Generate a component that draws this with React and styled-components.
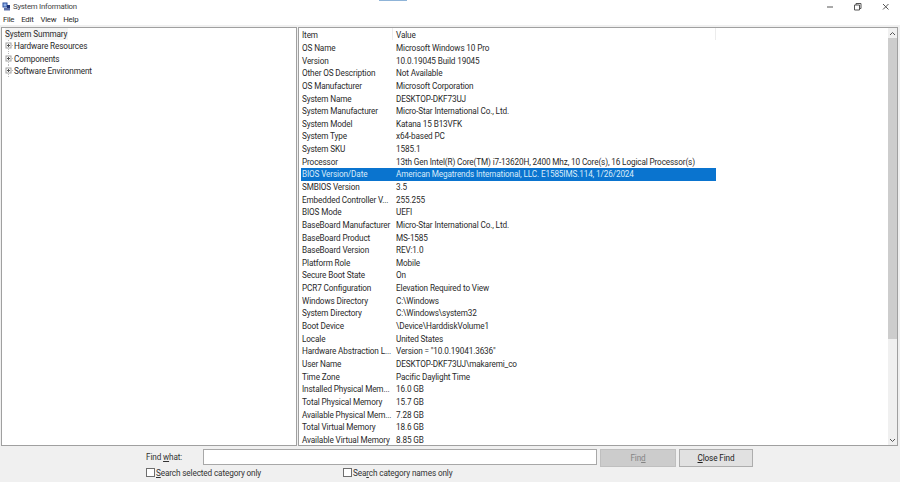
import React from "react";
import styled, { createGlobalStyle } from "styled-components";

const GlobalStyle = createGlobalStyle`
  html, body { margin: 0; padding: 0; background: #fff; }
  #root { width: 900px; height: 482px; overflow: hidden; }
`;

const Window = styled.div`
  position: relative;
  width: 900px;
  height: 482px;
  display: flex;
  flex-direction: column;
  background: #f0f0f0;
  font-family: Roboto, "Noto Sans", sans-serif;
  font-size: 8.2px;
  letter-spacing: -0.13px;
  color: #2a2a2a;
  overflow: hidden;
`;

const PeekStrip = styled.div`
  position: absolute;
  top: 0;
  left: 379px;
  width: 28px;
  height: 1px;
  background: #8fb4d8;
`;

const TitleBar = styled.div`
  height: 13px;
  display: flex;
  align-items: center;
  background: #fff;
  padding: 0 0 0 2px;
  gap: 2px;
  font-size: 7.8px;
  letter-spacing: -0.25px;
`;

const TitleText = styled.span`
  flex: 1;
  color: #444;
`;

const WinControls = styled.div`
  display: flex;
  gap: 18px;
  margin-right: 10px;
`;

const MenuBar = styled.div`
  height: 12px;
  display: flex;
  align-items: center;
  gap: 7px;
  padding-left: 3px;
  background: #fff;
  font-size: 7.8px;
  letter-spacing: -0.25px;
`;

const Panels = styled.div`
  height: 419px;
  margin-top: 2px;
  padding: 0 2px 0 1px;
  display: flex;
  gap: 1px;
`;

const TreePanel = styled.div`
  width: 296px;
  box-sizing: border-box;
  border: 1px solid #a0a0a0;
  background: #fff;
  padding: 0 0 0 3px;
`;

const TreeRoot = styled.div`
  height: 12px;
  line-height: 12px;
  background: #f4f4f4;
  width: fit-content;
  padding-right: 1px;
`;

const TreeNode = styled.div`
  height: 12.4px;
  display: flex;
  align-items: center;
  gap: 1px;
`;

const ListPanel = styled.div`
  flex: 1;
  box-sizing: border-box;
  border: 1px solid #a0a0a0;
  background: #fff;
  display: flex;
`;

const ListBody = styled.div`
  flex: 1;
  padding: 1px 0 0 2px;
  position: relative;
`;

const Row = styled.div`
  width: 415px;
  height: 12.656px;
  display: grid;
  grid-template-columns: 94px 1fr;
  align-items: center;
  background: ${(p) => (p.$selected ? "#0a74cf" : "transparent")};
  color: ${(p) => (p.$selected ? "#d8ebfa" : "inherit")};
`;

const Cell = styled.span`
  padding-left: 1px;
  white-space: nowrap;
  overflow: hidden;
`;

const HeaderTick = styled.div`
  position: absolute;
  top: 0;
  left: ${(p) => p.$left}px;
  width: 1px;
  height: 12px;
  background: #ececec;
`;

const ScrollBar = styled.div`
  width: 9px;
  display: flex;
  flex-direction: column;
  background: #f0f0f0;
`;

const ScrollArrow = styled.div`
  height: 10px;
  display: flex;
  align-items: center;
  justify-content: center;
`;

const ScrollThumb = styled.div`
  height: 301px;
  background: #cdcdcd;
`;

const ScrollTrack = styled.div`
  flex: 1;
`;

const FindBar = styled.div`
  flex: 1;
  display: grid;
  grid-template-columns: 57px 394px 3px 76px 3px 74px;
  grid-template-rows: 18px 14px;
  padding: 3px 0 0 146px;
  align-items: center;
  color: #333;
`;

const FindLabel = styled.label`
  white-space: nowrap;
  margin-bottom: 2px;
`;

const FindInput = styled.div`
  grid-column: 2;
  height: 16px;
  box-sizing: border-box;
  border: 1px solid #a8a8a8;
  background: #fff;
  margin-bottom: 2px;
`;

const Btn = styled.div`
  grid-column: ${(p) => p.$col};
  height: 18px;
  box-sizing: border-box;
  display: flex;
  align-items: center;
  justify-content: center;
  background: ${(p) => (p.$disabled ? "#cccccc" : "#e1e1e1")};
  border: 1px solid ${(p) => (p.$disabled ? "#bfbfbf" : "#adadad")};
  color: ${(p) => (p.$disabled ? "#858585" : "#222")};
`;

const CheckRow = styled.div`
  grid-column: 1 / -1;
  display: flex;
  align-items: center;
  height: 14px;
  margin-top: -3px;
`;

const Check = styled.label`
  display: flex;
  align-items: center;
  gap: 1px;
  width: ${(p) => p.$width}px;
  white-space: nowrap;
`;

const Box = styled.span`
  width: 7px;
  height: 7px;
  border: 1px solid #6e6e6e;
  background: #fff;
  flex: none;
`;

const AppIcon = () => (
  <svg width="9" height="9" viewBox="0 0 9 9">
    <rect x="0.5" y="0.5" width="5" height="5" fill="#2b4f9e" />
    <rect x="1.5" y="1.5" width="3" height="3" fill="#8fb1e8" />
    <path d="M2 6h6v2.5H2z" fill="#5b6fa8" />
    <path d="M5 3h3v3H5z" fill="#1f3576" />
  </svg>
);

const Minimize = () => (
  <svg width="9" height="9" viewBox="0 0 9 9">
    <path d="M0 5h6" stroke="#555" fill="none" />
  </svg>
);

const Restore = () => (
  <svg width="9" height="9" viewBox="0 0 9 9">
    <path d="M0.5 3h5v5h-5zM2 3V1.5h5v5H5.5" stroke="#555" fill="none" />
  </svg>
);

const CloseX = () => (
  <svg width="9" height="9" viewBox="0 0 9 9">
    <path d="M2 2l5.5 5.5M7.5 2L2 7.5" stroke="#555" fill="none" />
  </svg>
);

const Expander = () => (
  <svg width="8" height="12" viewBox="0 0 8 12" style={{ flex: "none" }}>
    <path d="M3.5 0v2M3.5 9v3M7 5.5h1" stroke="#bbb" strokeDasharray="1 1" fill="none" />
    <rect x="1" y="3" width="5" height="5" fill="#fff" stroke="#a0a0a0" />
    <path d="M2 5.5h3M3.5 4v3" stroke="#555" fill="none" />
  </svg>
);

const Chevron = ({ up }) => (
  <svg width="7" height="5" viewBox="0 0 7 5">
    <path d={up ? "M1 4l2.5-2.5L6 4" : "M1 1l2.5 2.5L6 1"} stroke="#555" fill="none" />
  </svg>
);

const rows = [
  ["Item", "Value"],
  ["OS Name", "Microsoft Windows 10 Pro"],
  ["Version", "10.0.19045 Build 19045"],
  ["Other OS Description", "Not Available"],
  ["OS Manufacturer", "Microsoft Corporation"],
  ["System Name", "DESKTOP-DKF73UJ"],
  ["System Manufacturer", "Micro-Star International Co., Ltd."],
  ["System Model", "Katana 15 B13VFK"],
  ["System Type", "x64-based PC"],
  ["System SKU", "1585.1"],
  ["Processor", "13th Gen Intel(R) Core(TM) i7-13620H, 2400 Mhz, 10 Core(s), 16 Logical Processor(s)"],
  ["BIOS Version/Date", "American Megatrends International, LLC. E1585IMS.114, 1/26/2024"],
  ["SMBIOS Version", "3.5"],
  ["Embedded Controller V...", "255.255"],
  ["BIOS Mode", "UEFI"],
  ["BaseBoard Manufacturer", "Micro-Star International Co., Ltd."],
  ["BaseBoard Product", "MS-1585"],
  ["BaseBoard Version", "REV:1.0"],
  ["Platform Role", "Mobile"],
  ["Secure Boot State", "On"],
  ["PCR7 Configuration", "Elevation Required to View"],
  ["Windows Directory", "C:\\Windows"],
  ["System Directory", "C:\\Windows\\system32"],
  ["Boot Device", "\\Device\\HarddiskVolume1"],
  ["Locale", "United States"],
  ["Hardware Abstraction L...", 'Version = "10.0.19041.3636"'],
  ["User Name", "DESKTOP-DKF73UJ\\makaremi_co"],
  ["Time Zone", "Pacific Daylight Time"],
  ["Installed Physical Mem...", "16.0 GB"],
  ["Total Physical Memory", "15.7 GB"],
  ["Available Physical Mem...", "7.28 GB"],
  ["Total Virtual Memory", "18.6 GB"],
  ["Available Virtual Memory", "8.85 GB"],
];

export default function App() {
  return (
    <Window>
      <GlobalStyle />
      <PeekStrip />
      <TitleBar>
        <AppIcon />
        <TitleText>System Information</TitleText>
        <WinControls>
          <Minimize />
          <Restore />
          <CloseX />
        </WinControls>
      </TitleBar>
      <MenuBar>
        <span>File</span>
        <span>Edit</span>
        <span>View</span>
        <span>Help</span>
      </MenuBar>
      <Panels>
        <TreePanel>
          <TreeRoot>System Summary</TreeRoot>
          {["Hardware Resources", "Components", "Software Environment"].map((name) => (
            <TreeNode key={name}>
              <Expander />
              {name}
            </TreeNode>
          ))}
        </TreePanel>
        <ListPanel>
          <ListBody>
            <HeaderTick $left={93} />
            <HeaderTick $left={416} />
            {rows.map(([item, value]) => (
              <Row key={item} $selected={item === "BIOS Version/Date"}>
                <Cell>{item}</Cell>
                <Cell>{value}</Cell>
              </Row>
            ))}
          </ListBody>
          <ScrollBar>
            <ScrollArrow><Chevron up /></ScrollArrow>
            <ScrollThumb />
            <ScrollTrack />
            <ScrollArrow><Chevron /></ScrollArrow>
          </ScrollBar>
        </ListPanel>
      </Panels>
      <FindBar>
        <FindLabel>Find <u>w</u>hat:</FindLabel>
        <FindInput />
        <Btn $col={4} $disabled>Fin<u>d</u></Btn>
        <Btn $col={6}><u>C</u>lose Find</Btn>
        <CheckRow>
          <Check $width={197}><Box /><span><u>S</u>earch selected category only</span></Check>
          <Check><Box /><span>Sea<u>r</u>ch category names only</span></Check>
        </CheckRow>
      </FindBar>
    </Window>
  );
}
